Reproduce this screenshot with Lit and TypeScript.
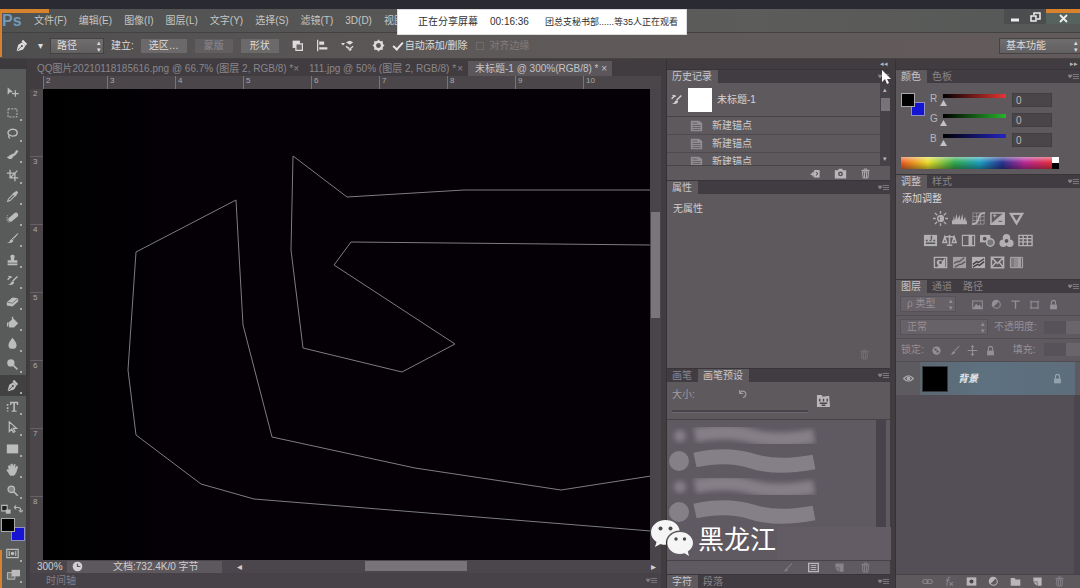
import { LitElement, html, css, svg } from "lit";
import { customElement } from "lit/decorators.js";

const icons: Record<string, unknown> = {
  move: svg`<path d="M2 3v9l3-3h4z" fill="currentColor"/><path d="M11.500 6.500v8M7.500 10.500h8" stroke="currentColor" stroke-width="1.500"/>`,
  marquee: svg`<rect x="2.500" y="3.500" width="11" height="10" fill="none" stroke="currentColor" stroke-dasharray="2.500 1.500" stroke-width="1.200"/>`,
  lasso: svg`<path d="M4 10C0 6 5 2 10 3s5 7 0 8-5-2-6-1-1 3 1 4" fill="none" stroke="currentColor" stroke-width="1.700"/>`,
  quick: svg`<path d="M1 11c3 0 3-3 6-3l2 2c-1 4-5 5-8 1z" fill="currentColor"/><path d="M7 9q4 0 7-6" fill="none" stroke="currentColor" stroke-width="3"/>`,
  crop: svg`<path d="M5 1v10h10M1 5h10v10M5 11L14 2" fill="none" stroke="currentColor" stroke-width="1.600"/>`,
  dropper: svg`<path d="M2 14l1-3 6-6 2 2-6 6z" fill="none" stroke="currentColor" stroke-width="1.300"/><path d="M8 4l4 4 1-2 2-3-2-2-3 2z" fill="currentColor"/>`,
  heal: svg`<path d="M3 9l8-7q4-1 4 4l-8 7q-5 1-4-4z" fill="currentColor"/><path d="M4 14Q0 12 2 5" fill="none" stroke="currentColor" stroke-dasharray="2 1"/>`,
  brush: svg`<path d="M14.500 2L7 9l1 1z" stroke="currentColor" stroke-width="1.200"/><path d="M1 13q4 0 4-3l2-1 2 2q-2 4-8 2z" fill="currentColor"/>`,
  stamp: svg`<path d="M6 7Q4 2 8 2t2 5v2h4v3H2V9h4zM2 13h12v2H2z" fill="currentColor"/>`,
  histbrush: svg`<path d="M14 3L8 9M3 3l4 1M2 7l4-4" stroke="currentColor" stroke-width="1.700"/><path d="M2 13q4 0 4-3l3-1 1 2q-2 4-8 2z" fill="currentColor"/>`,
  eraser: svg`<path d="M1 9l7-6 7 1v4l-7 6-7-1z" fill="currentColor"/><path d="M2 9l6 1 7-6" fill="none" stroke="#666"/>`,
  bucket: svg`<path d="M3 8l6-5 6 6-5 5H4z" fill="currentColor"/><path d="M2 8v5M8 1v6" stroke="currentColor" stroke-width="1.600"/>`,
  drop: svg`<path d="M8 1q5 6 5 9a5 4.500 0 0 1-10 0q0-3 5-9z" fill="currentColor"/>`,
  dodge: svg`<circle cx="6" cy="6" r="4.500" fill="currentColor"/><path d="M8 8l6 6" stroke="currentColor" stroke-width="1.800"/>`,
  pen: svg`<path d="M2 14l2-7 5-3 4 4-3 5-7 2z" fill="currentColor"/><path d="M10 1l5 5-2 2-5-5z" fill="currentColor"/><path d="M3 14l5-5" stroke="#414141"/><circle cx="8.500" cy="8.500" r="1.200" fill="#414141"/>`,
  type: svg`<path d="M5 2h10v4h-1.500l-.5-2h-2v9h2v1.500H7V13h2V4H7l-.5 2H5zM1 5h2v2H1zM1 9h2v2H1zM1 13h2v1H1z" fill="currentColor"/>`,
  arrow: svg`<path d="M4 1v12l3-3 2 4 2-1-2-4h4z" fill="none" stroke="currentColor" stroke-width="1.500"/>`,
  rect: svg`<path d="M1 3h14v11H1z" fill="currentColor"/>`,
  hand: svg`<path d="M5 15q-2-4-4-6 1-2 3 0L3 4q1-2 2 0l1 3V2q1-2 2 0v5l2-5q2-1 1 1v5l2-4q2 0 1 2l-2 6-2 3z" fill="currentColor" stroke="currentColor"/>`,
  zoom: svg`<circle cx="6.500" cy="6.500" r="4" fill="#888" stroke="currentColor" stroke-width="1.600"/><path d="M9.500 9.500l5 5" stroke="currentColor" stroke-width="2"/>`,
  mask: svg`<path d="M1 3h14v10H1zM4 5v6M12 5v6" fill="none" stroke="currentColor" stroke-width="1.400"/><circle cx="8" cy="8" r="2.200" fill="currentColor"/>`,
  screens: svg`<path d="M1.500 6h8v7h-8z" fill="#777" stroke="currentColor"/><path d="M6 3h9v7H6z" fill="currentColor"/>`,
  combine: svg`<path d="M2 2h9v9H2z" fill="currentColor"/><path d="M6 6h8v8H6z" fill="#686466" stroke="currentColor" stroke-width="1.500"/>`,
  align: svg`<path d="M2 1v14" stroke="currentColor" stroke-width="1.500"/><path d="M4 3h6v4H4zM4 10h10v3H4z" fill="currentColor"/>`,
  arrange: svg`<path d="M0 5h5l-2.500 3z" fill="currentColor"/><path d="M6 4l5-2 4 2-4 3zM6 8l5 3 4-3v2l-5 3-4-3zM8 12l3 3 3-3z" fill="currentColor"/>`,
  gear: svg`<circle cx="8" cy="8" r="4.500" fill="none" stroke="currentColor" stroke-width="3"/><path d="M8 1v2M8 13v2M1 8h2M13 8h2M3 3l2 2M11 11l2 2M3 13l2-2M11 5l2-2" stroke="currentColor" stroke-width="2"/>`,
  doc: svg`<path d="M1 2h10l4 3v10H1z" fill="#918d92"/><path d="M3 5h6M3 8h10M3 10.500h10M3 13h10" stroke="#5d595d"/>`,
  newdoc: svg`<path d="M6 3h8v11H6z" fill="currentColor"/><path d="M1 9h7M4.500 5.500v7" stroke="currentColor" stroke-width="2"/><path d="M9 6l2 2-2 3" fill="none" stroke="#555" stroke-width="1.500"/>`,
  camera: svg`<path d="M1 4h4l1-2h4l1 2h4v10H1z" fill="currentColor"/><circle cx="8" cy="8.500" r="3" fill="#555"/><circle cx="8" cy="8.500" r="1.200" fill="currentColor"/>`,
  trash: svg`<path d="M2 3.500h12M6 3V1.500h4V3M3.500 5.500h9l-1 9h-7zM6.500 6v8M9.500 6v8" fill="none" stroke="currentColor" stroke-width="1.300"/>`,
  menu: svg`<path d="M0 6h6l-3 4zM7 5h9M7 8h9M7 11h9" fill="currentColor" stroke="currentColor" stroke-width="1.200"/>`,
  sun: svg`<circle cx="8" cy="8" r="3" fill="none" stroke="currentColor" stroke-width="1.500"/><path d="M8 5a3 3 0 0 1 0 6zM8 0v3M8 13v3M0 8h3M13 8h3M2 2l2.500 2.500M11.500 11.500L14 14M2 14l2.500-2.500M11.500 4.500L14 2" fill="currentColor" stroke="currentColor" stroke-width="1.400"/>`,
  levels: svg`<path d="M0 14V9l1 2 1-6 1 5 2-7 1 6 2-5 1 6 2-7 1 7 2-4 1 6 1-3v5z" fill="currentColor"/>`,
  curves: svg`<path d="M2 2h12v12H2zM2 6h12M2 10h12M6 2v12M10 2v12" fill="none" stroke="currentColor" stroke-width=".6"/><path d="M1 14q6 0 7-6t7-6" fill="none" stroke="currentColor" stroke-width="1.800"/>`,
  exposure: svg`<path d="M1 2h14v12H1z" fill="none" stroke="currentColor" stroke-width="1.600"/><path d="M15 2v12H1zM3 5h4M5 3v4" fill="currentColor" stroke="currentColor"/><path d="M9 11h4" stroke="#555"/>`,
  vibrance: svg`<path d="M2 3h12L8 13z" fill="none" stroke="currentColor" stroke-width="2.500"/>`,
  hue: svg`<path d="M1 2h14v12H1z" fill="currentColor"/><path d="M3 8h2M7 8h2M11 8h2M3 11h10M9 3v4" stroke="#555" stroke-width="1.500"/>`,
  balance: svg`<path d="M8 2v11M3 4h10M5 13h6M3 4L1 10h4zM13 4l-2 6h4z" fill="none" stroke="currentColor" stroke-width="1.600"/>`,
  bw: svg`<path d="M1.500 2.500h13v11h-13z" fill="none" stroke="currentColor" stroke-width="1.200"/><path d="M8 2h4v12H8z" fill="currentColor"/>`,
  photo: svg`<path d="M0 2h11v8H0z" fill="currentColor"/><circle cx="5" cy="6" r="2" fill="#555"/><circle cx="11" cy="10" r="4" fill="#777" stroke="currentColor" stroke-width="1.600"/>`,
  mixer: svg`<circle cx="8" cy="5" r="4" fill="currentColor"/><circle cx="4.500" cy="11" r="4" fill="currentColor"/><circle cx="11.500" cy="11" r="4" fill="currentColor"/><circle cx="8" cy="8.500" r="2" fill="#555"/>`,
  lookup: svg`<path d="M1 2.500h14v11H1zM1 6h14M1 9.500h14M5.500 2v12M10 2v12" fill="none" stroke="currentColor" stroke-width="1.500"/>`,
  invert: svg`<path d="M1.500 2.500h13v11h-13z" fill="none" stroke="currentColor" stroke-width="1.500"/><path d="M4 13L13 3v10z" fill="currentColor"/><circle cx="7" cy="8" r="3" fill="currentColor"/><circle cx="8" cy="8" r="1.500" fill="#555"/>`,
  poster: svg`<path d="M1 2h14v12H1z" fill="currentColor" opacity=".8"/><path d="M2 9l4-2 2 0 5-4M3 13l5-3 2 0 4-3" fill="none" stroke="#5d595d" stroke-width="1.500"/>`,
  threshold: svg`<path d="M1 2h14v12H1z" fill="currentColor"/><path d="M2 10l4-3 2 1 6-4M2 13l5-3 2 1 5-4" fill="none" stroke="#454145" stroke-width="1.600"/>`,
  selective: svg`<path d="M1.500 2.500h13v11h-13zM1 2l7 7 7-7M1 14l5-6M15 14l-5-6" fill="none" stroke="currentColor" stroke-width="1.600"/>`,
  gradmap: svg`<path d="M1.500 2.500h13v11h-13z" fill="none" stroke="currentColor"/><path d="M2 3h3v10H2z" fill="currentColor" opacity=".4"/><path d="M5 3h4v10H5z" fill="currentColor" opacity=".6"/><path d="M9 3h4v10H9z" fill="currentColor" opacity=".8"/>`,
  image: svg`<path d="M1 3h14v11H1z" fill="none" stroke="currentColor" stroke-width="1.500"/><path d="M2 13l4-6 3 3 2-2 3 5z" fill="currentColor"/>`,
  half: svg`<circle cx="8" cy="8" r="5.500" fill="none" stroke="currentColor" stroke-width="1.500"/><path d="M3 12A6 6 0 0 1 12 3z" fill="currentColor"/>`,
  scope: svg`<circle cx="8" cy="8" r="7" fill="currentColor"/><path d="M8 4v4h4" fill="none" stroke="#5c585d" stroke-width="1.800"/>`,
  tee: svg`<path d="M2 3h12M8 3v11" stroke="currentColor" stroke-width="2"/>`,
  frame: svg`<path d="M3 4h10v9H3zM1 4h14M1 13h14M3 2v13M13 2v13" fill="none" stroke="currentColor"/>`,
  lock: svg`<path d="M5 8V5q0-3 3-3t3 3v3" fill="none" stroke="currentColor" stroke-width="1.600"/><path d="M3 8h10v7H3z" fill="currentColor"/>`,
  checker: svg`<circle cx="8" cy="8" r="6" fill="currentColor"/><path d="M5 5h3v3H5zM8 8h3v3H8z" fill="#555"/>`,
  cross: svg`<path d="M8 1v14M1 8h14M6 3l2-2 2 2M6 13l2 2 2-2" stroke="currentColor" fill="none" stroke-width="1.500"/>`,
  eye: svg`<path d="M1 8q7-8 14 0-7 8-14 0z" fill="none" stroke="currentColor" stroke-width="1.800"/><circle cx="8" cy="8" r="2.800" fill="currentColor"/>`,
  reset: svg`<path d="M4 3v5h5M4 8q3-6 8-2 3 5-3 8" fill="none" stroke="currentColor" stroke-width="1.800"/>`,
  presets: svg`<path d="M1 2h5l1 2 7-1 1 12H1z" fill="currentColor"/><path d="M4 6v3M8 6v3M12 6v3M4 11h8M6 13h4" stroke="#4a464b" stroke-width="1.500"/>`,
  board: svg`<path d="M1 2h14v12H1z" fill="none" stroke="currentColor" stroke-width="2"/><path d="M4 5h8M4 8h8M4 11h8" stroke="currentColor" stroke-width="1.400"/>`,
  page: svg`<path d="M2 2h12v12H8V8H2z" fill="currentColor"/><path d="M2 9h5v5z" fill="currentColor"/>`,
  folder: svg`<path d="M1 3h6l1 2h7v9H1z" fill="currentColor"/>`,
  maskadd: svg`<path d="M1 2h14v12H1z" fill="currentColor"/><circle cx="8" cy="8" r="3" fill="#49454b"/>`,
  link: svg`<path d="M1 8q0-3 4-3t4 3-4 3-4-3zM7 8q0-3 4-3t4 3-4 3-4-3z" fill="none" stroke="currentColor" stroke-width="1.600"/>`,
  fx: svg`<path d="M9 2Q6 1 5.500 5L4 14M3 6h5M8 9l5 5M13 9l-5 5" fill="none" stroke="currentColor" stroke-width="1.600"/>`,
  swap: svg`<path d="M3 5h6q4 0 4 5M3 5l3-3M3 5l3 3M13 12l-3-3M13 12l3-3" fill="none" stroke="currentColor" stroke-width="1.500"/>`,
  defaults: svg`<path d="M1 2h8v8H1z" fill="#222" stroke="currentColor" stroke-width="1.500"/><path d="M7 8h7v6H7z" fill="currentColor"/>`,
};

const icon = (name: string, size = "") =>
  html`<svg class="icon ${size}" viewBox="0 0 16 16" aria-hidden="true">${icons[name]}</svg>`;

const iconButton = (name: string, label: string, size = "") =>
  html`<button class="plain" aria-label=${label}>${icon(name, size)}</button>`;

const TOOLS = [
  ["move", "移动"], ["marquee", "选框"], ["lasso", "套索"], ["quick", "快速选择"], ["crop", "裁剪"],
  ["dropper", "吸管"], ["heal", "修复画笔"], ["brush", "画笔"], ["stamp", "图章"], ["histbrush", "历史画笔"],
  ["eraser", "橡皮擦"], ["bucket", "油漆桶"], ["drop", "模糊"], ["dodge", "减淡"], ["pen", "钢笔"],
  ["type", "文字"], ["arrow", "路径选择"], ["rect", "矩形"], ["hand", "抓手"], ["zoom", "缩放"],
];
const MENUS = ["文件(F)", "编辑(E)", "图像(I)", "图层(L)", "文字(Y)", "选择(S)", "滤镜(T)", "3D(D)", "视图(V)"];
const ADJUST = [
  ["sun", "levels", "curves", "exposure", "vibrance"],
  ["hue", "balance", "bw", "photo", "mixer", "lookup"],
  ["invert", "poster", "threshold", "selective", "gradmap"],
];

@customElement("app-root")
export class AppRoot extends LitElement {
  static styles = css`
    :host {
      display: flex;
      flex-direction: column;
      height: 100vh;
      overflow: hidden;
      position: relative;
      background: #403c40;
      color: #b9b6b9;
      font: 10px/14px "Liberation Sans", "Noto Sans CJK SC", sans-serif;
      white-space: nowrap;
    }
    * { box-sizing: border-box; }
    button, select, input { font: inherit; color: inherit; margin: 0; padding: 0; border: 0; border-radius: 0; background: none; }
    .icon { width: 13px; height: 13px; display: block; flex: none; }
    .icon.s { width: 11px; height: 11px; }
    .icon.l { width: 15px; height: 15px; }
    .plain { display: flex; align-items: center; justify-content: center; flex: none; }
    .grow { flex: 1; min-width: 0; }
    .dim { color: #88838a; }

    .desktop { height: 9px; flex: none; background: #2a2a33; }
    .menubar {
      height: 24px; flex: none; display: flex; align-items: center; gap: 12px; position: relative;
      background: linear-gradient(90deg, #505151, #5c5c5a 70%, #555857); border-bottom: 1px solid #434142; color: #c6c6c4;
    }
    .menubar::before { content: ""; position: absolute; left: 0; top: 0; width: 49px; height: 4px; background: #d8822e; }
    .edge { position: absolute; left: 0; top: 9px; width: 2px; height: 48px; background: #d8822e; }
    .edge.low { top: auto; bottom: 0; height: 38px; }
    .logo { font-weight: 700; font-size: 16px; line-height: 20px; color: #7199b8; width: 22px; padding-left: 2px; }
    .window { display: flex; align-self: stretch; color: #eee; }
    .window button { width: 21px; height: 15px; display: flex; align-items: center; justify-content: center; background: #4b4d4e; }
    .window .close { width: 34px; border-top: 4px solid #d8822e; background: #56625d; }

    .options {
      height: 26px; flex: none; display: flex; align-items: center; gap: 8px; padding-left: 15px;
      background: linear-gradient(90deg, #4f4e4f, #5e5959 45%, #635b5b); border-bottom: 1px solid #474344; color: #dedcdc;
    }
    .pick { display: flex; flex: none; position: relative; align-items: center; }
    .pick select { appearance: none; width: 100%; height: 14px; padding: 0 6px; background: linear-gradient(#6f6d6e, #625f61); outline: 1px solid #454244; }
    .pick::after { content: "▴\\A▾"; white-space: pre; position: absolute; right: 2px; top: 0; font-size: 7px; line-height: 7px; pointer-events: none; }
    .w-mode { width: 52px; }
    .w-work { width: 80px; }
    .btn { height: 14px; width: 46px; background: #6b696a; text-align: center; }
    .btn.slim { width: 38px; }
    .btn:disabled { color: #8e888a; background: #625e60; }
    .set { display: flex; align-items: center; gap: 7px; }
    .set.first { gap: 10px; }
    .set.icons { gap: 12px; padding: 0 10px 0 4px; }
    .check { display: flex; align-items: center; gap: 2px; }
    .check input { appearance: none; width: 10px; height: 10px; display: block; }
    .check input:checked::before { content: ""; display: block; width: 8px; height: 4px; border: solid #e5e5e5; border-width: 0 0 2px 2px; transform: rotate(-48deg); margin-top: 1px; }
    .check.off { color: #827c7e; gap: 6px; }
    .check.off input { border: 1px solid #6f696b; width: 8px; height: 8px; }

    .work { flex: 1; min-height: 0; display: flex; }
    .toolbar { width: 27px; flex: none; padding-top: 10px; display: flex; flex-direction: column; border-right: 1px solid #3c3a3c; background: linear-gradient(#3d3a3e 10px, #595a5a 10px); }
    .grip { height: 12px; flex: none; }
    .tool { height: 21px; width: 100%; display: flex; align-items: center; padding-left: 6px; color: #bcbcbc; position: relative; flex: none; }
    .tool::after { content: ""; position: absolute; right: 4px; bottom: 2px; width: 2px; height: 2px; background: #aaa; }
    .tool:first-of-type::after { display: none; }
    .tool.on { background: #414142; }
    .mini { display: flex; justify-content: space-between; padding: 3px 3px 3px 1px; color: #bbb; }
    .swatches { display: grid; grid-template: 9px 5px 9px / 10px 4px 10px; padding-left: 1px; margin-bottom: 2px; flex: none; }
    .fore { grid-area: 1 / 1 / 3 / 3; background: #000; border: 1px solid #aaa; z-index: 1; }
    .back { grid-area: 2 / 2 / 4 / 4; background: #1414d2; border: 1px solid #8f8fc4; }

    .doc { flex: 1; min-width: 0; display: flex; flex-direction: column; padding-left: 3px; }
    .tabs { height: 17px; flex: none; display: flex; align-items: flex-end; padding-top: 1px; color: #8b878b; }
    .tab { display: flex; justify-content: space-between; height: 15px; line-height: 15px; padding: 0 5px 0 7px; }
    .t1 { width: 270px; padding-right: 4px; }
    .t2 { width: 168px; padding-left: 9px; }
    .t3 { width: 144px; background: #5a565a; color: #c6c3c6; }
    .stage { flex: 1; min-height: 0; display: grid; grid-template: 13px 1fr / 13px 1fr 11px; }
    .ruler { background: #4a464a; overflow: hidden; display: flex; color: #aaa; font-size: 8px; line-height: 10px; }
    .ruler span { flex: none; width: 68px; border-left: 1px solid #777; padding-left: 2px; }
    .ruler.h { grid-column: 2 / 4; }
    .ruler.h span:first-child { width: 64px; }
    .ruler.v { flex-direction: column; }
    .ruler.v span { width: auto; height: 68px; border: 0; border-bottom: 1px solid #656165; padding: 0 0 0 3px; }
    .canvas { background: linear-gradient(90deg, #000, #040006 20%, #040006); overflow: hidden; }
    .canvas svg { display: block; width: 100%; height: 100%; }
    .vbar { background: #484449; padding: 123px 1px 0; }
    .vbar i { display: block; height: 106px; background: #79757a; }
    .status { height: 13px; flex: none; display: flex; align-items: center; background: #4a464b; color: #d0ced0; line-height: 13px; }
    .status .info { background: #5c585d; width: 155px; display: flex; gap: 30px; height: 12px; align-items: center; padding-left: 5px; }
    .status .zoomv { width: 37px; padding-left: 7px; }
    .track { flex: 1; display: flex; padding: 0 5px 0 15px; }
    .track::before { content: ""; order: 1; flex: 2; }
    .track span:first-child { order: 0; }
    .track .knob { order: 2; width: 102px; height: 10px; background: #777378; margin-top: 1px; }
    .track::after { content: ""; order: 3; flex: 3; }
    .track span:last-child { order: 4; }
    .timeline { height: 15px; flex: none; display: flex; justify-content: space-between; align-items: center; padding: 0 4px 0 16px; background: #464248; color: #837f84; }

    .col { flex: none; display: flex; flex-direction: column; margin-left: 5px; border-left: 1px solid #353236; }
    .mid { width: 224px; }
    .right { width: 185px; }
    .strip { height: 10px; flex: none; text-align: right; line-height: 10px; font-size: 7px; padding-right: 2px; }
    .ptabs { height: 14px; flex: none; display: flex; align-items: center; background: #403c41; color: #89858a; padding-right: 1px; border-top: 1px solid #37343a; }
    .ptabs button { height: 13px; line-height: 13px; padding: 0 6px 0 5px; }
    .ptabs .on { background: #5d595d; color: #c9c6ca; }
    .ptabs .grow { display: flex; justify-content: flex-end; }
    .panel { background: #5d595d; flex: none; }
    .history { height: 82px; display: flex; }
    .hlist { flex: 1; overflow: hidden; }
    .snap { height: 34px; display: flex; align-items: center; gap: 5px; padding-left: 3px; border-bottom: 1px solid #464246; color: #d6d4d6; }
    .paper { width: 24px; height: 24px; background: #fff; }
    .state { height: 18px; display: flex; align-items: center; gap: 9px; padding-left: 23px; border-bottom: 1px solid #4d494e; color: #cfcdd0; }
    .hbar { width: 10px; background: #454146; padding: 2px 0; display: flex; flex-direction: column; align-items: center; font-size: 7px; line-height: 9px; }
    .hbar i { width: 9px; height: 13px; background: #77737a; margin-top: 4px; margin-bottom: auto; }
    .foot { height: 15px; display: flex; align-items: center; justify-content: flex-end; gap: 13px; padding-right: 19px; border-top: 1px solid #464246; color: #b9b6ba; }
    .props { height: 174px; padding: 8px 6px; color: #d0cdd1; display: flex; flex-direction: column; justify-content: space-between; }
    .props .ghost { align-self: flex-end; color: #77727a; padding-right: 14px; }
    .brushhead { height: 38px; display: flex; align-items: center; gap: 8px; padding: 0 8px 0 5px; border-bottom: 1px solid #464147; }
    .size { width: 136px; display: flex; flex-direction: column; gap: 8px; color: #a29da4; }
    .size div { display: flex; justify-content: space-between; padding-right: 60px; }
    .size input { appearance: none; display: block; width: 100%; height: 3px; background: #48434a; border-bottom: 1px solid #6c666e; }
    .size input::-webkit-slider-thumb { appearance: none; width: 0; }
    .brushes { flex: 1; min-height: 0; overflow: hidden; display: flex; background: #5f5962; }
    .brushes svg { width: 150px; height: 106px; display: block; }
    .bar { width: 14px; background: #48434a; border-right: 4px solid #5f5962; margin-left: auto; }
    .brushfoot { height: 14px; gap: 15px; background: #5f5a62; }

    .color { height: 91px; padding: 10px 21px 0 5px; display: flex; flex-direction: column; }
    .mix { display: flex; gap: 5px; }
    .mix .swatches { padding: 0; }
    .rows { flex: 1; }
    .row { display: flex; align-items: flex-start; height: 20px; gap: 6px; line-height: 12px; }
    .row label { width: 7px; }
    .row .slide { appearance: none; width: 63px; height: 14px; background: linear-gradient(90deg, #000, var(--c)) 0 1px / 100% 4px no-repeat; }
    .slide::-webkit-slider-thumb { appearance: none; width: 7px; height: 6px; margin-top: 6px; margin-left: -3px; background: #c4c2c4; clip-path: polygon(50% 0, 100% 100%, 0 100%); }
    .r { --c: #e83434; }
    .g { --c: #27b32c; }
    .b { --c: #2424c6; }
    .num { width: 40px; height: 14px; background: #4a4549; border: 1px solid #413d41; padding: 0 3px; }
    .spectrum { margin-top: 4px; height: 12px; display: flex; background: linear-gradient(rgba(255,255,255,.45), transparent 45%, rgba(0,0,0,.35)), linear-gradient(90deg, #ef5a22, #e8df2b 17%, #32a94d 34%, #1d9ec0 50%, #2a3390 64%, #b52a96 78%, #e62f45 94%); }
    .spectrum i { margin-left: auto; width: 7px; background: linear-gradient(#fff 50%, #000 50%); }
    .adjust { height: 91px; padding: 4px 6px 0; color: #d8d6d9; }
    .adjust p { margin: 0 0 6px; }
    .arow { display: flex; justify-content: center; gap: 5px; height: 22px; width: 152px; color: #b3b0b4; }
    .arow .plain { width: 14px; height: 13px; }
    .lrow { height: 23px; flex: none; display: flex; align-items: center; gap: 7px; padding-left: 5px; border-bottom: 1px solid #514c52; color: #958f97; background: #5f5a60; overflow: hidden; }
    .lrow .pick select { background: #676168; outline-color: #57525a; }
    .kinds { gap: 8px; padding-left: 10px; }
    .w-kind { width: 54px; }
    .w-blend { width: 86px; }
    .val { flex: 1; min-width: 0; height: 13px; background: #57515a; border-right: 14px solid #6a646b; }
    .fill { display: flex; flex: 1; min-width: 0; gap: 8px; margin-left: 10px; }
    .layer { height: 33px; flex: none; display: flex; align-items: center; background: #5d5a60; color: #e3e6ea; padding-right: 5px; }
    .layer .plain { width: 24px; color: #aaa; }
    .hit { flex: 1; height: 100%; display: flex; align-items: center; gap: 10px; background: linear-gradient(90deg, #5c6872, #5d7180 40%, #5d6d7b); padding: 0 12px 0 2px; font-weight: 700; font-style: italic; }
    .thumb { width: 26px; height: 26px; background: #000; border: 1px solid #35393e; }
    .hit .icon { margin-left: auto; color: #93a2ad; }
    .rest { flex: 1; min-height: 0; background: #544e56; border-right: 6px solid #4b464d; }
    .layerfoot { height: 14px; gap: 11px; padding-right: 15px; }

    .share { position: absolute; left: 397px; top: 9px; height: 26px; width: 290px; background: #fff; color: #303030; display: flex; align-items: center; gap: 12px; padding: 0 8px 0 20px; border: 1px solid #ddd; }
    .share .who { margin-left: auto; font-size: 9px; }
    .cursor { position: absolute; left: 879px; top: 69px; width: 12px; height: 16px; }
    .haze { position: absolute; left: 777px; top: 527px; width: 114px; height: 33px; background: #635c65; }
    .brand { position: absolute; left: 651px; top: 518px; display: flex; align-items: center; gap: 5px; color: #fff; font: 26px/40px "Noto Sans CJK SC", sans-serif; }
    .brand svg { width: 42px; height: 38px; }
  `;

  private ptabs(names: string[], active = 0) {
    return html`<div class="ptabs">
      ${names.map((n, i) => html`<button class=${i === active ? "on" : ""}>${n}</button>`)}
      <span class="grow">${icon("menu", "s")}</span>
    </div>`;
  }

  private select(cls: string, label: string, value: string) {
    return html`<span class="pick ${cls}"><select aria-label=${label}><option>${value}</option></select></span>`;
  }

  private swatches() {
    return html`<div class="swatches"><span class="fore"></span><span class="back"></span></div>`;
  }

  private channel(name: string) {
    const id = name.toLowerCase();
    return html`<div class="row">
      <label for=${id}>${name}</label>
      <input class="slide ${id}" type="range" min="0" max="255" value="0" aria-label=${name} />
      <input class="num" id=${id} value="0" />
    </div>`;
  }

  private document() {
    return html`<main class="doc">
      <div class="tabs">
        <div class="tab t1"><span>QQ图片20210118185616.png @ 66.7% (图层 2, RGB/8) *</span><span>×</span></div>
        <div class="tab t2"><span>111.jpg @ 50% (图层 2, RGB/8) *</span><span>×</span></div>
        <div class="tab t3"><span>未标题-1 @ 300%(RGB/8) *</span><span>×</span></div>
      </div>
      <div class="stage">
        <span></span>
        <div class="ruler h">${[2, 3, 4, 5, 6, 7, 8, 9, 10].map((n) => html`<span>${n}</span>`)}</div>
        <div class="ruler v">${[2, 3, 4, 5, 6, 7, 8].map((n) => html`<span>${n}</span>`)}</div>
        <div class="canvas">
          <svg fill="none" stroke="#7d7d7d" stroke-width="1">
            <g transform="translate(-43 -89)">
              <path d="M700 190H464L347 197 293 156 291 250 303 348 402 372 455 344 334 265 351 242 651 245H700" />
              <path d="M700 468L651 476 561 490 415 468 272 437 243 325 236 200 136 252 128 370 136 435 201 484 254 499 651 531 700 535" />
            </g>
          </svg>
        </div>
        <div class="vbar"><i></i></div>
      </div>
      <div class="status">
        <span class="zoomv">300%</span>
        <span class="info">${icon("scope", "s")}<span>文档:732.4K/0 字节</span></span>
        <span class="track"><span>◂</span><span class="knob"></span><span>▸</span></span>
      </div>
      <div class="timeline"><span>时间轴</span>${icon("menu", "s")}</div>
    </main>`;
  }

  private middle() {
    return html`<aside class="col mid">
      <div class="strip">◂◂</div>
      ${this.ptabs(["历史记录"])}
      <div class="panel history">
        <div class="hlist">
          <div class="snap">${icon("histbrush")}<span class="paper"></span><span>未标题-1</span></div>
          ${[1, 2, 3].map(() => html`<div class="state">${icon("doc")}<span>新建锚点</span></div>`)}
        </div>
        <div class="hbar"><span>▴</span><i></i><span>▾</span></div>
      </div>
      <div class="panel foot">
        ${iconButton("newdoc", "从当前状态创建新文档", "s")}${iconButton("camera", "新建快照")}${iconButton("trash", "删除", "s")}
      </div>
      ${this.ptabs(["属性"])}
      <div class="panel props"><span>无属性</span><span class="ghost">${icon("trash", "s")}</span></div>
      ${this.ptabs(["画笔", "画笔预设"], 1)}
      <div class="panel brushhead">
        <div class="size">
          <div><label for="size">大小:</label>${icon("reset", "s")}</div>
          <input id="size" type="range" />
        </div>
        ${iconButton("presets", "画笔面板", "l")}
      </div>
      <div class="brushes">
        <svg viewBox="0 0 150 106" fill="none" stroke="#857f87">
          <defs><filter id="soft" x="-20%" y="-60%" width="140%" height="220%"><feGaussianBlur stdDeviation="2.500" /></filter></defs>
          ${[15, 66].map((y) => svg`<g filter="url(#soft)">
            <circle cx="13" cy=${y + 1} r="3" stroke-width="6" />
            <path stroke-width="14" d="M28 ${y}Q60 ${y - 6} 85 ${y + 1}T147 ${y + 1}" /></g>`)}
          ${[40, 91].map((y) => svg`<g>
            <circle cx="12" cy=${y + 1} r="10" fill="#857f87" stroke="none" />
            <path stroke-width="15" stroke-linejoin="round" d="M28 ${y}Q60 ${y - 7} 85 ${y + 1}T147 ${y + 2}" /></g>`)}
        </svg>
        <span class="bar"></span>
      </div>
      <div class="foot brushfoot">
        <span class="dim">${icon("brush", "s")}</span>${iconButton("board", "预设管理器", "s")}
        <span class="dim">${icon("page", "s")}</span><span class="dim">${icon("trash", "s")}</span>
      </div>
      ${this.ptabs(["字符", "段落"])}
    </aside>`;
  }

  private rightColumn() {
    return html`<aside class="col right">
      <div class="strip">▸▸</div>
      ${this.ptabs(["颜色", "色板"])}
      <div class="panel color">
        <div class="mix">${this.swatches()}<div class="rows">${["R", "G", "B"].map((c) => this.channel(c))}</div></div>
        <div class="spectrum"><i></i></div>
      </div>
      ${this.ptabs(["调整", "样式"])}
      <div class="panel adjust">
        <p>添加调整</p>
        ${ADJUST.map((r) => html`<div class="arow">${r.map((n) => iconButton(n, n, "l"))}</div>`)}
      </div>
      ${this.ptabs(["图层", "通道", "路径"])}
      <div class="lrow">
        ${this.select("w-kind", "类型", "ρ 类型")}
        <span class="set kinds">${["image", "half", "tee", "frame", "lock"].map((n) => icon(n, "s"))}</span>
      </div>
      <div class="lrow">
        ${this.select("w-blend", "混合模式", "正常")}
        <label for="opacity">不透明度:</label><input class="val" id="opacity" />
      </div>
      <div class="lrow">
        <span>锁定:</span>${["checker", "brush", "cross", "lock"].map((n) => icon(n, "s"))}
        <span class="fill"><label for="fill">填充:</label><input class="val" id="fill" /></span>
      </div>
      <div class="layer">
        ${iconButton("eye", "可见性", "s")}
        <div class="hit"><span class="thumb"></span><span>背景</span>${icon("lock", "s")}</div>
      </div>
      <div class="rest"></div>
      <div class="panel foot layerfoot">
        <span class="dim">${icon("link", "s")}</span><span class="dim">${icon("fx", "s")}</span>
        ${iconButton("maskadd", "蒙版", "s")}${iconButton("half", "调整图层", "s")}${iconButton("folder", "新建组", "s")}${iconButton("page", "新建图层", "s")}
        <span class="dim">${icon("trash", "s")}</span>
      </div>
    </aside>`;
  }

  render() {
    return html`
      <div class="desktop"></div>
      <nav class="menubar">
        <span class="logo">Ps</span>
        ${MENUS.map((m) => html`<button>${m}</button>`)}
        <span class="grow"></span>
        <span class="window">
          <button aria-label="最小化"><svg width="10" height="10"><path d="M1 8h8" stroke="#eee" stroke-width="3" /></svg></button>
          <button aria-label="还原"><svg width="11" height="10" fill="none" stroke="#eee" stroke-width="1.500"><path d="M1 4h5v5H1zM4 3V1h6v6H7" /></svg></button>
          <button class="close" aria-label="关闭"><svg width="9" height="9"><path d="M1 1l7 7M8 1L1 8" stroke="#eee" stroke-width="1.800" /></svg></button>
        </span>
      </nav>
      <div class="options">
        <span class="set first">${icon("pen")}<span>▾</span></span>
        ${this.select("w-mode", "工具模式", "路径")}
        <span class="set">
          <span>建立:</span><button class="btn">选区…</button>
        </span>
        <button class="btn slim" disabled>蒙版</button>
        <button class="btn slim">形状</button>
        <span class="set icons">${iconButton("combine", "路径操作")}${iconButton("align", "路径对齐")}${iconButton("arrange", "路径排列")}</span>
        ${iconButton("gear", "设置")}
        <label class="check"><input type="checkbox" checked />自动添加/删除</label>
        <label class="check off"><input type="checkbox" disabled />对齐边缘</label>
        <span class="grow"></span>
        ${this.select("w-work", "工作区", "基本功能")}
      </div>
      <div class="work">
        <div class="toolbar">
          <div class="grip"></div>
          ${TOOLS.map(([n, label]) => html`<button class="tool ${n === "pen" ? "on" : ""}" aria-label=${label}>${icon(n)}</button>`)}
          <div class="mini">${icon("defaults", "s")}${icon("swap", "s")}</div>
          ${this.swatches()}
          <button class="tool" aria-label="快速蒙版">${icon("mask")}</button>
          <button class="tool" aria-label="屏幕模式">${icon("screens", "l")}</button>
        </div>
        ${this.document()} ${this.middle()} ${this.rightColumn()}
      </div>
      <span class="edge"></span><span class="edge low"></span>
      <div class="share"><span>正在分享屏幕</span><span>00:16:36</span><span class="who">团总支秘书部......等35人正在观看</span></div>
      <svg class="cursor" viewBox="0 0 12 16"><path d="M3 1v12l3-3 2 5 2-1-2-4h4z" fill="#fff" /></svg>
      <div class="haze"></div>
      <div class="brand">
        <svg viewBox="0 0 42 38" fill="#f5f5f5">
          <path d="M14.500 1C6.500 1 0 6.500 0 13.500c0 4 2 7 5.500 9.500L4 28l5.500-3c2 .7 3.500.8 5.500.8C14 18 20 11.500 28.700 11.500 27.500 5 21.500 1 14.500 1z" />
          <path d="M29 13c-7 0-12.700 4.800-12.700 11S22 35 29 35c1.500 0 3-.3 4.500-.8L38 37l-1.200-4.500C40 30.500 42 27.500 42 24c0-6.200-6-11-13-11z" />
          <g fill="#4b484d"><circle cx="9.500" cy="9.500" r="2" /><circle cx="19.500" cy="9.500" r="2" /><circle cx="25" cy="20" r="1.700" /><circle cx="33.500" cy="20" r="1.700" /></g>
        </svg>
        <span>黑龙江</span>
      </div>
    `;
  }
}
